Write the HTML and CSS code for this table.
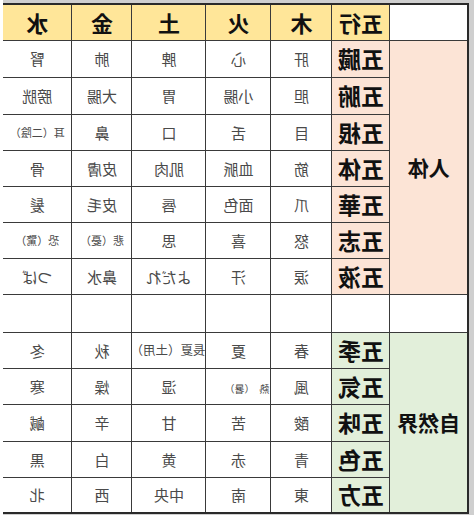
FILE: index.html
```html
<!DOCTYPE html>
<html lang="ja">
<head>
<meta charset="utf-8">
<title>五行</title>
<link rel="stylesheet" href="styles.css">
</head>
<body>
<div class="page">
  <table class="wx">
    <colgroup>
      <col class="c-cat"><col class="c-el"><col class="c-wood"><col class="c-fire"><col class="c-earth"><col class="c-metal"><col class="c-water">
    </colgroup>
    <tr class="h36">
      <th class="corner"></th>
      <th class="hd">五行</th><th class="hd">木</th><th class="hd">火</th><th class="hd">土</th><th class="hd">金</th><th class="hd">水</th>
    </tr>
    <tr class="h37">
      <th class="cat pink" rowspan="7">人体</th>
      <th class="el pink">五臓</th><td>肝</td><td>心</td><td>脾</td><td>肺</td><td>腎</td>
    </tr>
    <tr class="h37">
      <th class="el pink">五腑</th><td>胆</td><td>小腸</td><td>胃</td><td>大腸</td><td>膀胱</td>
    </tr>
    <tr class="h36">
      <th class="el pink">五根</th><td>目</td><td>舌</td><td>口</td><td>鼻</td><td class="sm">耳（二陰）</td>
    </tr>
    <tr class="h36">
      <th class="el pink">五体</th><td>筋</td><td>血脈</td><td>肌肉</td><td>皮膚</td><td>骨</td>
    </tr>
    <tr class="h36">
      <th class="el pink">五華</th><td>爪</td><td>面色</td><td>唇</td><td>皮毛</td><td>髪</td>
    </tr>
    <tr class="h36">
      <th class="el pink">五志</th><td>怒</td><td>喜</td><td>思</td><td class="sm">悲（憂）</td><td class="sm">恐（驚）</td>
    </tr>
    <tr class="h36">
      <th class="el pink">五液</th><td>涙</td><td>汗</td><td>よだれ</td><td>鼻水</td><td>つば</td>
    </tr>
    <tr class="h38">
      <td></td><td></td><td></td><td></td><td></td><td></td><td></td>
    </tr>
    <tr class="h36">
      <th class="cat green" rowspan="5">自然界</th>
      <th class="el green">五季</th><td>春</td><td>夏</td><td class="clip">長夏（土用）</td><td>秋</td><td>冬</td>
    </tr>
    <tr class="h36">
      <th class="el green">五気</th><td>風</td><td class="heat"><span class="tiny">熱</span><span class="tiny paren">（暑）</span></td><td>湿</td><td>燥</td><td>寒</td>
    </tr>
    <tr class="h37">
      <th class="el green">五味</th><td>酸</td><td>苦</td><td>甘</td><td>辛</td><td>鹹</td>
    </tr>
    <tr class="h36">
      <th class="el green">五色</th><td>青</td><td>赤</td><td>黄</td><td>白</td><td>黒</td>
    </tr>
    <tr class="h36">
      <th class="el green">五方</th><td>東</td><td>南</td><td>中央</td><td>西</td><td>北</td>
    </tr>
  </table>
</div>
</body>
</html>
```
FILE: styles.css
```css
html, body {
  margin: 0;
  padding: 0;
  background: #ffffff;
}
.page {
  width: 474px;
  height: 515px;
  box-sizing: border-box;
  padding: 3px 0 0 5px;
  border-right: 3px solid #ffffff;
  background: #cfcfcf;
  transform: scaleX(-1);
  transform-origin: 50% 50%;
  overflow: hidden;
}
.wx {
  table-layout: fixed;
  border-collapse: collapse;
  width: 466px;
  border: 2px solid #2a2a2a;
  font-family: "Noto Sans CJK JP", "Noto Sans", sans-serif;
  background: #ffffff;
}
.c-cat { width: 78px; }
.c-el { width: 58px; }
.c-wood { width: 61px; }
.c-fire { width: 65px; }
.c-earth { width: 74px; }
.c-metal { width: 60px; }
.c-water { width: 70px; }

.wx th, .wx td {
  border: 1px solid #3a3a3a;
  padding: 0;
  text-align: center;
  vertical-align: middle;
  white-space: nowrap;
  line-height: 1;
}
.h36 { height: 36px; }
.h37 { height: 37px; }
.h38 { height: 38px; }

.wx td {
  font-size: 15px;
  font-weight: 400;
  color: #4a4a4a;
}
.wx td.sm {
  font-size: 11px;
}
.wx td.clip {
  overflow: hidden;
  text-align: right;
  padding-right: 3px;
  font-size: 12.5px;
}
.wx td.heat {
  text-align: right;
  padding-right: 18px;
}
.tiny {
  font-size: 10px;
}
.paren {
  margin-left: 5px;
}
.corner {
  background: #ffffff;
}
.hd {
  background: #ffe699;
  color: #111111;
  font-size: 22px;
  font-weight: 700;
}
.el {
  font-size: 23px;
  font-weight: 700;
  color: #111111;
}
.cat {
  font-size: 21px;
  font-weight: 700;
  color: #111111;
}
.pink { background: #fce4d6; }
.green { background: #e2efda; }
```
